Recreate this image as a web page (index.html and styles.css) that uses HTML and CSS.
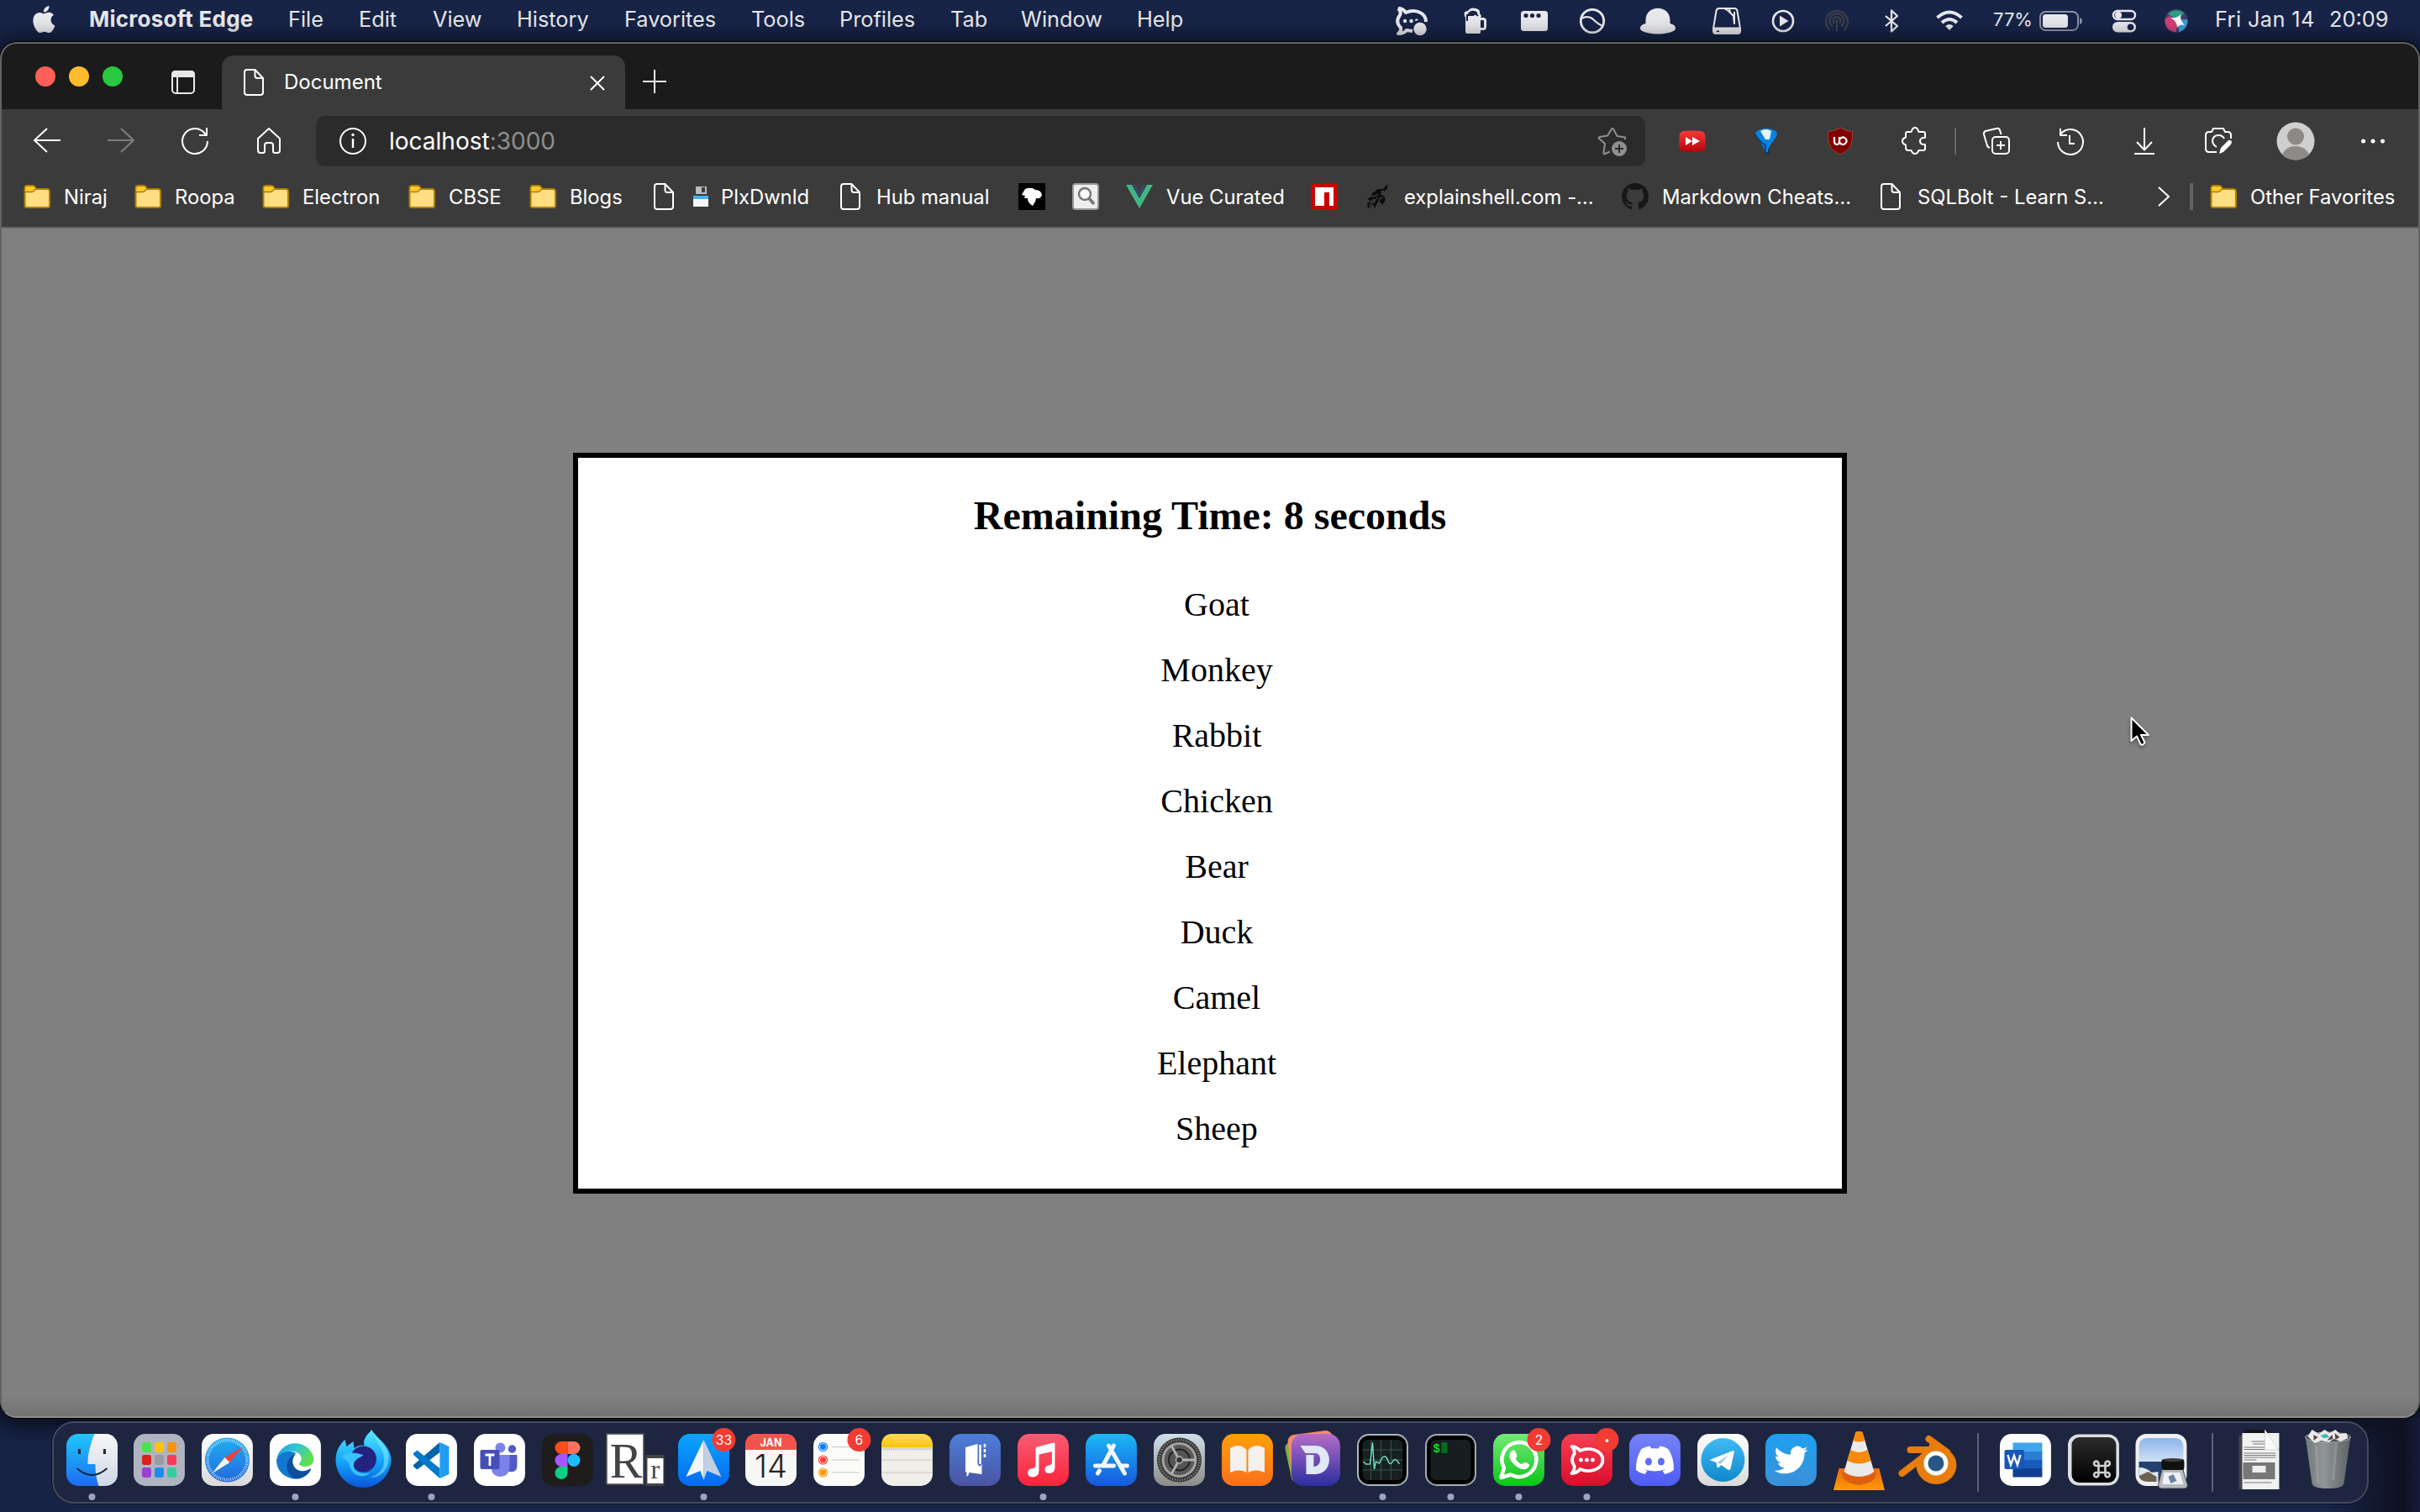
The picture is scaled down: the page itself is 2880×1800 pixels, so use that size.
FILE: index.html
```html
<!DOCTYPE html>
<html lang="en">
<head>
<meta charset="utf-8">
<title>Document</title>
<link rel="stylesheet" href="styles.css">
</head>
<body>
<svg class="defs" aria-hidden="true">
  <defs>
    <linearGradient id="gBlue" x1="0" y1="0" x2="0" y2="1"><stop offset="0" stop-color="#1fc8fb"/><stop offset="1" stop-color="#1c6cf2"/></linearGradient>
    <linearGradient id="gFace" x1="0" y1="0" x2="0" y2="1"><stop offset="0" stop-color="#f6f6f8"/><stop offset="1" stop-color="#cfd8e6"/></linearGradient>
    <linearGradient id="gSilver" x1="0" y1="0" x2="0" y2="1"><stop offset="0" stop-color="#fff"/><stop offset="1" stop-color="#dadada"/></linearGradient>
    <linearGradient id="gSafari" x1="0" y1="0" x2="0" y2="1"><stop offset="0" stop-color="#1fb0f3"/><stop offset="1" stop-color="#2467dc"/></linearGradient>
    <linearGradient id="gEdge" x1="0" y1="0" x2="1" y2=".4"><stop offset="0" stop-color="#1c9de0"/><stop offset=".5" stop-color="#33c3d8"/><stop offset="1" stop-color="#5fe04f"/></linearGradient>
    <linearGradient id="gFox" x1="0" y1="0" x2="0" y2="1"><stop offset="0" stop-color="#57e6ff"/><stop offset=".55" stop-color="#12a5fa"/><stop offset="1" stop-color="#0a56d8"/></linearGradient>
    <linearGradient id="gSpark" x1="0" y1="0" x2="0" y2="1"><stop offset="0" stop-color="#0aa6fe"/><stop offset="1" stop-color="#0669f0"/></linearGradient>
    <linearGradient id="gNotes" x1="0" y1="0" x2="0" y2="1"><stop offset="0" stop-color="#ffdc55"/><stop offset="1" stop-color="#fdc40a"/></linearGradient>
    <linearGradient id="gDev" x1="0" y1="0" x2="0" y2="1"><stop offset="0" stop-color="#4c7fdb"/><stop offset="1" stop-color="#4a54a2"/></linearGradient>
    <linearGradient id="gMusic" x1="0" y1="0" x2="0" y2="1"><stop offset="0" stop-color="#fb5b74"/><stop offset="1" stop-color="#fa233b"/></linearGradient>
    <linearGradient id="gStore" x1="0" y1="0" x2="0" y2="1"><stop offset="0" stop-color="#1bb9f5"/><stop offset="1" stop-color="#1658dc"/></linearGradient>
    <linearGradient id="gPrefs" x1="0" y1="0" x2="0" y2="1"><stop offset="0" stop-color="#cfe0ea"/><stop offset="1" stop-color="#8d8b88"/></linearGradient>
    <linearGradient id="gBooks" x1="0" y1="0" x2="0" y2="1"><stop offset="0" stop-color="#ff9f0a"/><stop offset="1" stop-color="#fb6f1b"/></linearGradient>
    <linearGradient id="gDash" x1="0" y1="0" x2="0" y2="1"><stop offset="0" stop-color="#b56ccb"/><stop offset="1" stop-color="#2c2e9e"/></linearGradient>
    <linearGradient id="gWa" x1="0" y1="0" x2="0" y2="1"><stop offset="0" stop-color="#74ea77"/><stop offset="1" stop-color="#0ac51a"/></linearGradient>
    <linearGradient id="gRc" x1="0" y1="0" x2="0" y2="1"><stop offset="0" stop-color="#f83e53"/><stop offset="1" stop-color="#d90e2b"/></linearGradient>
    <linearGradient id="gDisc" x1="0" y1="0" x2="0" y2="1"><stop offset="0" stop-color="#7583f7"/><stop offset="1" stop-color="#4f5cf3"/></linearGradient>
    <linearGradient id="gTg" x1="0" y1="0" x2="0" y2="1"><stop offset="0" stop-color="#41bbf5"/><stop offset="1" stop-color="#0e88cc"/></linearGradient>
    <linearGradient id="gTw" x1="0" y1="0" x2="0" y2="1"><stop offset="0" stop-color="#1da1f2"/><stop offset="1" stop-color="#3a90d6"/></linearGradient>
    <linearGradient id="gCone" x1="0" y1="0" x2="0" y2="1"><stop offset="0" stop-color="#e86a10"/><stop offset="1" stop-color="#ff9a05"/></linearGradient>
    <linearGradient id="gTrash" x1="0" y1="0" x2="1" y2="0"><stop offset="0" stop-color="#74787a"/><stop offset=".4" stop-color="#8f9495"/><stop offset="1" stop-color="#5e6365"/></linearGradient>
    <linearGradient id="gRed" x1="0" y1="0" x2="0" y2="1"><stop offset="0" stop-color="#f93a3a"/><stop offset="1" stop-color="#b50308"/></linearGradient>
    <linearGradient id="gSky" x1="0" y1="0" x2="0" y2="1"><stop offset="0" stop-color="#8db3ea"/><stop offset="1" stop-color="#cfe0f6"/></linearGradient>
    <linearGradient id="gCmd" x1="0" y1="0" x2="0" y2="1"><stop offset="0" stop-color="#2c2c2c"/><stop offset="1" stop-color="#000"/></linearGradient>
    <symbol id="folder" viewBox="0 0 32 32"><path d="M1.500 27V6Q1.500 3 4.500 3H11Q13 3 14 5L15 7H28Q31 7 31 10V27Q31 29 29 29H4Q1.500 29 1.500 27Z" fill="#ffdf82" stroke="#ad7d00" stroke-width="2"/><path d="M2.500 9.500V6Q2.500 4 4.500 4H11Q12.500 4 13.500 6L14 7.500 11.500 9.800Q11 10.300 10 10.300H2.500Z" fill="#ffca28"/><path d="M1.500 10.500H10Q11 10.500 12 9.500L15 7" fill="none" stroke="#ad7d00" stroke-width="1.500"/></symbol>
    <symbol id="page" viewBox="0 0 32 32"><path d="M17.500 1H8Q5 1 5 4V28Q5 31 8 31H24Q27 31 27 28V11Z M17.500 1V8Q17.500 11 20 11H27" fill="none" stroke="#fff" stroke-width="2" stroke-linejoin="round"/></symbol>
  </defs>
</svg>

<header class="menubar">
  <svg class="mi" viewBox="-24 -24 48 48"><path class="f" d="M9.700 -.200C9.700 -4 12.800 -5.800 12.900 -5.900C11.200 -8.400 8.500 -8.800 7.500 -8.800C5.200 -9 3 -7.400 1.900 -7.400C.700 -7.400 -1.100 -8.800 -3.100 -8.700C-5.700 -8.700 -8 -7.200 -9.400 -5C-12.100 -.300 -10.100 6.800 -7.500 10.600C-6.100 12.500 -4.600 14.600 -2.600 14.500C-.600 14.400 .100 13.200 2.400 13.200C4.800 13.200 5.400 14.500 7.500 14.500C9.600 14.400 11 12.600 12.200 10.700C13.700 8.500 14.300 6.400 14.300 6.300C14.200 6.200 9.700 4.500 9.700 -.200ZM6 -11.300C7.100 -12.700 7.900 -14.500 7.700 -16.400C6.100 -16.300 4.100 -15.300 3 -13.900C2 -12.700 1.100 -10.900 1.300 -9.100C3.100 -9 4.900 -10 6 -11.300Z" transform="translate(-1.500 -1) scale(1.040)"/></svg>
  <b class="m-app">Microsoft Edge</b><span>File</span><span>Edit</span><span>View</span><span>History</span><span>Favorites</span><span>Tools</span><span>Profiles</span><span>Tab</span><span>Window</span><span>Help</span>
  <svg class="mi" viewBox="-24 -24 48 48"><path class="s" stroke-width="4" d="M-16 -15Q-10 -15 -7 -10C4 -15 17 -10 17 1M-16 -15Q-12 -11 -14 -7Q-20 1 -13 8Q-12 12 -16 15Q-9 15 -6 11L1 12"/><circle class="f" cx="-8" cy="0" r="2.200"/><circle class="f" cx="-.500" cy="0" r="2.200"/><path class="f" d="M4 0A2 2 0 0 1 8 -1Z"/><circle class="f" cx="10" cy="9.500" r="7.700"/></svg>
  <svg class="mi" viewBox="-24 -24 48 48"><path class="f" d="M-12 -6Q-14 -12 -8 -12Q-5 -17 1 -15Q7 -14 6 -9Q9 -6 7 -4V14Q7 15 5 15H-9Q-11 15 -11 13V-4Z"/><path d="M-9 0V-7H-2L1 -9 4 -6" fill="none" stroke="#182447" stroke-width="2"/><path d="M-8 -9Q-5 -13 0 -12Q4 -11 3 -8L-1 -7H-8Z" fill="#182447"/><path class="s" stroke-width="3" d="M6 -2.500H10Q12.500 -2.500 12.500 0V7Q12.500 9.500 10 9.500H6"/></svg>
  <svg class="mi" viewBox="-24 -24 48 48"><rect class="f" x="-16" y="-12" width="32" height="24" rx="3.500"/><g fill="#182447"><circle cx="-10" cy="-6.500" r="2.600"/><circle cx="-2.500" cy="-6.500" r="2.600"/><circle cx="5" cy="-6.500" r="2.600"/></g></svg>
  <svg class="mi" viewBox="-24 -24 48 48"><circle class="s" r="13.700" stroke-width="2.800"/><path class="s" stroke-width="2.200" d="M-13 -3C-7 -6 -2 -5 2 -1S8 4 12 6"/></svg>
  <svg class="mi" viewBox="-24 -24 48 48"><path class="f" d="M-14.500 3V-1C-14.500 -20 14.500 -20 14.500 -1V3C19 4 21 6 21 9C21 13 9 15.500 0 15.500S-21 13 -21 9C-21 6 -19 4 -14.500 3Z"/></svg>
  <svg class="mi" viewBox="-24 -24 48 48"><path class="s" stroke-width="2" d="M-9 -15H9Q12 -15 12.500 -12L16 9V12Q16 15 13 15H-13Q-16 15 -16 12V9L-12.500 -12Q-12 -15 -9 -15Z"/><path class="f" fill-rule="evenodd" d="M-16 7.500H16V12Q16 15.500 13 15.500H-13Q-16 15.500 -16 12ZM-12 11.500H-9V13H-12Z"/><path class="s" stroke-width="2" d="M-3 -15L2 -12 8 -6 9 4M3 -15L4 -10M9 -11V3"/></svg>
  <svg class="mi" viewBox="-24 -24 48 48"><circle class="s" r="12" stroke-width="2.600"/><path class="f" d="M-4 -6.500L6.500 0 -4 6.500Z"/></svg>
  <svg class="mi" viewBox="-24 -24 48 48"><g fill="none" stroke="#3e4048" stroke-width="2.200"><path d="M-8 11A13 13 0 1 1 8 11M-5 6.500A8.500 8.500 0 1 1 5 6.500M-3 3A4.500 4.500 0 1 1 3 3"/></g><circle r="2" fill="#3e4048"/><path d="M-1 2H1V12H-1Z" fill="#3e4048"/></svg>
  <svg class="mi" viewBox="-24 -24 48 48"><path class="s" stroke-width="2.300" d="M-7 -6L7 6 0 12.500V-12.500L7 -6 -7 6"/></svg>
  <svg class="mi" viewBox="-24 -24 48 48"><path class="s" stroke-width="4" stroke-linecap="butt" d="M-14.500 -4Q0 -17 14.500 -4M-9 2Q0 -6 9 2"/><path class="f" d="M-4.800 6Q0 2 4.800 6L0 11Z"/></svg>
  <span class="pct">77%</span>
  <svg class="bat" viewBox="0 0 56 48"><rect x="4" y="13" width="45" height="22" rx="6.500" fill="none" stroke="#8b91a3" stroke-width="2"/><rect class="f" x="7" y="16" width="30" height="16" rx="3.500"/><path d="M51 20Q54 21 54 24T51 28Z" fill="#8b91a3"/></svg>
  <svg class="mi" viewBox="-24 -24 48 48"><rect class="s" x="-13" y="-12" width="26" height="10" rx="5" stroke-width="2.400"/><circle class="f" cx="-7" cy="-7" r="4"/><rect class="f" x="-14" y="1" width="28" height="12.500" rx="6.200"/><circle cx="7.500" cy="7.200" r="3.800" fill="#182447"/></svg>
  <svg class="mi" viewBox="-24 -24 48 48"><circle r="14" fill="#39406b"/><path d="M-10 -8A13 13 0 0 1 9 -9L2 -1Z" fill="#2e9b84"/><path d="M-13 -3A13 13 0 0 0 0 13L1 0-8 -6Z" fill="#d23f78"/><path d="M3 13A13 13 0 0 0 13 -2L2 -1Z" fill="#3b9fd8"/><path d="M-7 -4Q2 -3 5 -8Q4 -1 10 5Q4 3 1 8Q1 0 -7 -4Z" fill="#fff"/></svg>
  <span class="date">Fri Jan 14</span><span class="time">20:09</span>
</header>

<main class="window">
  <div class="tabstrip">
    <div class="lights"><i class="red"></i><i class="amber"></i><i class="green"></i></div>
    <svg class="vt" viewBox="0 0 28 28"><rect x="1" y="1" width="26" height="26" rx="4" fill="none" stroke="#e8e8e8" stroke-width="2"/><path d="M1 7V5Q1 1 5 1H23Q27 1 27 5V7ZM7 8V27" fill="#e8e8e8" stroke="#e8e8e8" stroke-width="2"/></svg>
    <div class="tab">
      <svg class="i32" viewBox="0 0 32 32"><use href="#page"/></svg><span class="tabtitle">Document</span>
      <svg class="close" viewBox="0 0 18 18"><path d="M1 1L17 17M17 1L1 17" stroke="#fff" stroke-width="2"/></svg>
    </div>
    <svg class="plus" viewBox="0 0 28 28"><path d="M14 0V28M0 14H28" stroke="#e8e8e8" stroke-width="2"/></svg>
  </div>

  <div class="toolbar">
    <svg class="ti" viewBox="-24 -24 48 48"><path d="M16 -1H-15M0 -15L-15 -1 0 13" /></svg>
    <svg class="ti dim" viewBox="-24 -24 48 48"><path d="M-16 -1H15M0 -15L15 -1 0 13"/></svg>
    <svg class="ti" viewBox="-24 -24 48 48"><path d="M15 0A15 15 0 1 1 9 -12L14 -7M14 -16V-7H5"/></svg>
    <svg class="ti" viewBox="-24 -24 48 48"><path d="M-13 -3L0 -15 13 -3V11Q13 14 10 14H7Q5 14 5 12V5Q5 2 2 2H-2Q-5 2 -5 5V12Q-5 14 -7 14H-10Q-13 14 -13 11Z"/></svg>
    <div class="address">
      <svg class="ti" viewBox="-24 -24 48 48"><circle r="15"/><path d="M0 -3V8" stroke-width="2.400"/><circle cy="-7.500" r="1" fill="#fff" stroke-width="1.500"/></svg>
      <span class="url">localhost<em>:3000</em></span>
      <svg class="ti star" viewBox="-24 -24 48 48"><path d="M-3 12.500L-9 15Q-11 16 -10.500 13L-9 3 -16 -3Q-17 -5 -15 -5L-6 -6.500 -1 -14.500Q0 -16 1 -14.500L5.500 -6 15 -4.500V-2"/><circle cx="8" cy="9" r="9" fill="#8f8f8f" stroke="none"/><path d="M8 4V14M3 9H13" stroke="#2b2b2b"/></svg>
    </div>
    <svg class="ti" viewBox="-24 -24 48 48"><path d="M-15.500 -6Q-15 -11.500 -10 -12Q0 -13 10 -12Q15 -11.500 15.500 -6Q16 0 15.500 7Q15 12 10 12.500Q0 13.500 -10 12.500Q-15 12 -15.500 7Q-16 0 -15.500 -6Z" fill="url(#gRed)" stroke="none"/><path d="M-8 -5L0 0V-5L9 0 0 5V0L-8 5Z" fill="#fff" stroke="none"/></svg>
    <svg class="ti" viewBox="-24 -24 48 48"><path d="M-13 -9C-11 -17 11 -17 13 -9C13 -4 4 3 2 11V14H-2V11C-4 3 -13 -4 -13 -9Z" fill="#0b83e0" stroke="none"/><path d="M-7 -12Q0 -16 6 -12L4 -2H-1Z" fill="#e5f5ff" stroke="none"/><path d="M-13 -8Q-9 0 -1 5V14H3V9" stroke="#063363" stroke-width="1.500"/></svg>
    <svg class="ti" viewBox="-24 -24 48 48"><path d="M0 -16Q6 -12 14.500 -11.500C15 2 13 10 0 16C-13 10 -15 2 -14.500 -11.500Q-6 -12 0 -16Z" fill="#800000" stroke="#a14646" stroke-width="1"/><path d="M-7 -5V0Q-7 4 -4 4T-1 0V-5M-1 -.500A4.300 4.300 0 1 1 -1 0" stroke-width="2.200"/></svg>
    <svg class="ti" viewBox="-24 -24 48 48"><path d="M-9 -11H-5Q-4 -11 -4 -12Q-3 -16 0 -16T4 -12Q4 -11 5 -11H10Q12 -11 12 -9V-4H10Q6 -3.500 6 0T10 4H12V9Q12 11 10 11H5Q4 11 4 12Q3 15 0 15T-4 12Q-4 11 -5 11H-8Q-11 11 -11 8V5Q-11 4 -12 4Q-15 3 -15 0T-12 -4Q-11 -4 -11 -5V-9Q-11 -11 -9 -11Z" transform="translate(1 0)"/></svg>
    <i class="tsep"></i>
    <svg class="ti" viewBox="-24 -24 48 48"><rect x="-5" y="-5" width="20" height="20" rx="4"/><path d="M5 0V10M0 5H10M-8 8Q-11 7 -11.500 4L-15 -8Q-15.500 -11 -13 -12L0 -15Q3 -16 4 -13L5.500 -8"/></svg>
    <svg class="ti" viewBox="-24 -24 48 48"><path d="M-12 -15V-7H-4M-12 -8A15 15 0 1 1 -15 1M-1 -7V3H5"/></svg>
    <svg class="ti" viewBox="-24 -24 48 48"><path d="M0 -16V10M-9 1L0 10.500 9 1M-12 15H12"/></svg>
    <svg class="ti" viewBox="-24 -24 48 48"><path d="M-2 13H-11Q-15 13 -15 9V-7Q-15 -11 -11 -11H-8L-6 -15H6L8 -11H11Q15 -11 15 -7V-3M-2 7Q-7 4 -7 -1A7.500 7.500 0 0 1 7 -3"/><path d="M1 15L3 8 12 -1Q15 -2 16 1Q16 3 14 5L6 13Z" fill="#fff" stroke="none"/></svg>
    <svg class="ti" viewBox="-24 -24 48 48"><clipPath id="av"><circle r="22.500"/></clipPath><circle r="22.500" fill="#d0cfcd" stroke="none"/><g clip-path="url(#av)" fill="#8b8a88" stroke="none"><circle cy="-5.500" r="10"/><ellipse cy="20" rx="16.500" ry="14"/></g></svg>
    <svg class="ti" viewBox="-24 -24 48 48"><g fill="#fff" stroke="none"><circle cx="-11.500" r="2.500"/><circle r="2.500"/><circle cx="11.500" r="2.500"/></g></svg>
  </div>

  <nav class="bookmarks">
    <svg class="i32"><use href="#folder"/></svg><span>Niraj</span>
    <svg class="i32"><use href="#folder"/></svg><span>Roopa</span>
    <svg class="i32"><use href="#folder"/></svg><span>Electron</span>
    <svg class="i32"><use href="#folder"/></svg><span>CBSE</span>
    <svg class="i32"><use href="#folder"/></svg><span>Blogs</span>
    <svg class="i32"><use href="#page"/></svg>
    <svg class="i24" viewBox="0 0 24 24"><path d="M1 0H22L24 2V24H0V1Z" fill="#3c3c3c"/><rect x="6" y="0" width="13" height="9" fill="#b9bcc0"/><rect x="13" y="1" width="4" height="6" fill="#3a3a3a"/><rect x="3" y="11" width="18" height="13" fill="#f4f6f8"/><rect x="3" y="11" width="18" height="4" fill="#43b4f0"/></svg><span>PlxDwnld</span>
    <svg class="i32"><use href="#page"/></svg><span>Hub manual</span>
    <svg class="i32" viewBox="0 0 32 32"><path d="M0 0H32V32H0Z"/><path d="M5 12L8 7Q12 5 17 6L20 8Q27 8 28 14Q27 19 21 18L20 22 17 27Q11 24 11 18L7 18 8 15 4 14Z" fill="#fff"/></svg>
    <svg class="i32" viewBox="0 0 32 32"><rect x="1" y="1" width="30" height="30" rx="3" fill="#eee" stroke="#999" stroke-width="2"/><circle cx="15" cy="13" r="7" fill="#f8f8f8" stroke="#777" stroke-width="2.500"/><path d="M20 18L26 25" stroke="#777" stroke-width="3.500"/></svg>
    <svg class="i32" viewBox="0 0 32 32"><path d="M0 2H7L16 18 25 2H32L16 30Z" fill="#41b883"/><path d="M7 2H12L16 9 20 2H25L16 18Z" fill="#35495e"/></svg><span>Vue Curated</span>
    <svg class="i32" viewBox="0 0 32 32"><path d="M0 0H32V32H0Z" fill="#c00"/><path d="M5 5H27V27H22V11H16V27H5Z" fill="#fff"/></svg>
    <svg class="i32" viewBox="0 0 32 32"><path d="M27 1Q28 9 22 10L18 13Q24 14 25 20L21 26Q19 21 16 23L12 30 10 25 4 30 3 24 7 21 3 19 8 16 9 12 16 7 22 7Z" fill="#0c0c0c"/><path d="M5 27L13 19M8 16L16 14M19 10L23 9M14 27L18 20M10 24L15 17M6 23L11 19M17 19L22 17" stroke="#3b3b3b" stroke-width="1.500"/></svg><span>explainshell.com -…</span>
    <svg class="i32" viewBox="0 0 16 16"><path fill="#181616" d="M8 0C3.580 0 0 3.580 0 8c0 3.540 2.290 6.530 5.470 7.590.4.070.55-.17.55-.38 0-.19-.01-.82-.01-1.490-2.010.37-2.530-.49-2.690-.94-.09-.23-.48-.94-.82-1.130-.28-.15-.68-.52-.01-.53.63-.01 1.080.58 1.230.82.72 1.210 1.870.87 2.330.66.07-.52.28-.87.51-1.070-1.780-.2-3.640-.89-3.640-3.950 0-.87.31-1.590.82-2.150-.08-.2-.36-1.020.08-2.120 0 0 .67-.21 2.200.82.64-.18 1.320-.27 2-.27s1.360.09 2 .27c1.530-1.040 2.200-.82 2.200-.82.44 1.100.16 1.920.08 2.120.51.56.82 1.270.82 2.150 0 3.070-1.870 3.750-3.650 3.950.29.25.54.73.54 1.480 0 1.070-.01 1.930-.01 2.200 0 .21.15.46.55.38A8.010 8.010 0 0 0 16 8c0-4.420-3.580-8-8-8z"/></svg><span>Markdown Cheats…</span>
    <svg class="i32"><use href="#page"/></svg><span>SQLBolt - Learn S…</span>
    <svg class="i32" viewBox="0 0 32 32"><path d="M9 5L21 16 9 27" fill="none" stroke="#fff" stroke-width="2"/></svg>
    <i class="bsep"></i>
    <svg class="i32"><use href="#folder"/></svg><span>Other Favorites</span>
  </nav>

  <section class="page">
    <div class="card">
      <h2>Remaining Time: 8 seconds</h2>
      <ul>
        <li>Goat</li><li>Monkey</li><li>Rabbit</li><li>Chicken</li><li>Bear</li><li>Duck</li><li>Camel</li><li>Elephant</li><li>Sheep</li>
      </ul>
    </div>
  </section>
</main>

<footer class="desk">
<div class="dock">
  <!-- Finder -->
  <svg viewBox="-40.5 -46 81 98"><clipPath id="body"><rect x="-30.500" y="-31" width="61" height="62" rx="14"/></clipPath><g clip-path="url(#body)"><path d="M-31 -31H31V31H-31Z" fill="url(#gBlue)"/><path d="M3 -31C-2 -18 -5 -8 -5 5H4Q4 20 8 31H31V-31Z" fill="url(#gFace)"/></g><path d="M-15 -13V-7M15 -13V-7" stroke="#1c2a3c" stroke-width="3"/><path d="M-18 10Q0 26 18 10" fill="none" stroke="#14243a" stroke-width="2"/><circle class="dot" cy="44" r="4"/></svg>
  <!-- Launchpad -->
  <svg viewBox="-40.500 -46 81 98"><rect x="-30.500" y="-31" width="61" height="62" rx="14" fill="#b0b4c0"/><g><rect x="-20.500" y="-21" width="11" height="12" rx="2.500" fill="#4fe04f"/><rect x="-5.500" y="-21" width="11" height="12" rx="2.500" fill="#fdc312"/><rect x="9.500" y="-21" width="11" height="12" rx="2.500" fill="#f8920f"/><rect x="-20.500" y="-6" width="11" height="12" rx="2.500" fill="#dd1f1f"/><rect x="-5.500" y="-6" width="11" height="12" rx="2.500" fill="#999da1"/><rect x="9.500" y="-6" width="11" height="12" rx="2.500" fill="#fb3958"/><rect x="-20.500" y="9" width="11" height="12" rx="2.500" fill="#9b3fd1"/><rect x="-5.500" y="9" width="11" height="12" rx="2.500" fill="#1a8ef5"/><rect x="9.500" y="9" width="11" height="12" rx="2.500" fill="#2ecfa0"/></g></svg>
  <!-- Safari -->
  <svg viewBox="-40.500 -46 81 98"><rect x="-30.500" y="-31" width="61" height="62" rx="14" fill="url(#gSilver)"/><circle r="26.500" fill="url(#gSafari)"/><circle r="23.500" fill="none" stroke="#d8efff" stroke-width="3.500" stroke-dasharray=".8 1.660"/><path d="M19 -16L3 3 -3 -3Z" fill="#f0413a"/><path d="M-18 16L-3 -3 3 3Z" fill="#f4f4f4"/></svg>
  <!-- Edge -->
  <svg viewBox="-40.500 -46 81 98"><rect x="-30.500" y="-31" width="61" height="62" rx="14" fill="#fff"/><path d="M-22.500 2A22.500 22.500 0 0 1 22 -2C23 8 11 10 5 6C3 4 8 3 7 -3C6 -9 -4 -12 -10 -9C-17 -7 -22 -2 -22.500 2Z" fill="url(#gEdge)"/><path d="M-22.500 1C-20 -10 -8 -12 1 -8C-6 -4 -8 8 0 14C6 18 14 17 19 11C14 20 4 24 -5 22C-16 19 -22 11 -22.500 1Z" fill="#1478d0"/><path d="M-10 7C-10 0 -6 -5 1 -7C-6 -1 -3 9 3 12C9 15 15 12 19 10C16 19 6 24 -1 22C-7 19 -10 14 -10 7Z" fill="#0c4f9c"/><circle class="dot" cy="44" r="4"/></svg>
  <!-- Firefox Developer Edition -->
  <svg viewBox="-40.500 -46 81 98"><path d="M10 -36C14 -27 32 -18 33 -1C33 18 18 33 0 33C-19 33 -33 18 -33 0C-33 -10 -28 -19 -22 -24L-20 -16 -12 -22 -11 -14C-7 -17 -3 -18 1 -17C-1 -26 6 -31 10 -36Z" fill="url(#gFox)"/><path d="M12 -33C14 -20 28 -12 24 6C22 14 14 20 6 21C24 22 31 8 30 -6C28 -18 15 -25 12 -33Z" fill="#7deeff" opacity=".55"/><circle cy="-1" r="15.500" fill="#25227f"/><path d="M-25 -5C-17 -11 -7 -8 0 -6C-4 -2 -7 -3 -11 3C-14 14 -2 18 8 15C0 24 -16 18 -17 4C-20 0 -24 -1 -25 -5Z" fill="#38c3ff"/></svg>
  <!-- VS Code -->
  <svg viewBox="-40.500 -46 81 98"><rect x="-30.500" y="-31" width="61" height="62" rx="14" fill="#fff"/><path d="M10 -21V-9L-17 11.500 -21.500 8V6Z" fill="#0065a9"/><path d="M10 22V10L-17 -11.500 -21.500 -8V-6Z" fill="#007acc"/><path d="M10 -21L21 -16V17L10 22Z" fill="#1f9cf0"/><circle class="dot" cy="44" r="4"/></svg>
  <!-- Teams -->
  <svg viewBox="-40.500 -46 81 98"><rect x="-30.500" y="-31" width="61" height="62" rx="14" fill="#fff"/><circle cx="1" cy="-14.500" r="6" fill="#7b83eb"/><circle cx="15" cy="-13" r="4.700" fill="#5059c9"/><path d="M8 -6H21V7Q21 15 13 14H8Z" fill="#5059c9"/><path d="M-10 -6H12V9Q11 20 1 20T-10 9Z" fill="#7b83eb"/><rect x="-23" y="-12" width="23" height="23" rx="2" fill="#464eb8"/><path d="M-17 -6H-6M-11.500 -6V7" stroke="#fff" stroke-width="2.800"/></svg>
  <!-- Figma -->
  <svg viewBox="-40.500 -46 81 98"><rect x="-30.500" y="-31" width="61" height="62" rx="14" fill="#1f1c1c"/><path d="M0 -22H-7.500A7.500 7.500 0 0 0 -7.500 -7H0Z" fill="#f24e1e"/><path d="M0 -22H7.500A7.500 7.500 0 0 1 7.500 -7H0Z" fill="#ff7262"/><path d="M0 -7H-7.500A7.500 7.500 0 0 0 -7.500 8H0Z" fill="#a259ff"/><circle cx="7.500" cy=".500" r="7.500" fill="#1abcfe"/><path d="M0 8H-7.500A7.500 7.500 0 1 0 0 15Z" fill="#0acf83"/></svg>
  <!-- Font tool -->
  <svg viewBox="-40.500 -46 81 98"><rect x="-34.500" y="-31" width="44" height="60" fill="#fff" stroke="#555" stroke-width="1.500"/><text class="serif" x="-31" y="21" font-size="60" textLength="39" lengthAdjust="spacingAndGlyphs">R</text><path d="M12 -6H34V31H12Z" fill="#444"/><path d="M14 -2H33V28H14Z" fill="#fff"/><text class="serif" x="18" y="22" font-size="32">r</text></svg>
  <!-- Spark -->
  <svg viewBox="-40.500 -46 81 98"><rect x="-30.500" y="-31" width="61" height="62" rx="14" fill="url(#gSpark)"/><path d="M0 -24L-21 20 -4 13 0 24Z" fill="#f2f6fb"/><path d="M0 -24L21 20 4 13 0 24Z" fill="#c5cfe2"/><circle class="badge" cx="24" cy="-24" r="14"/><text class="bt" x="24" y="-18.500" font-size="15.500">33</text><circle class="dot" cy="44" r="4"/></svg>
  <!-- Calendar -->
  <svg viewBox="-40.500 -46 81 98"><rect x="-30.500" y="-31" width="61" height="62" rx="14" fill="#f7f7f5"/><path d="M-30.500 -12V-17Q-30.500 -31 -16.500 -31H16.500Q30.500 -31 30.500 -17V-12Z" fill="#f2544b"/><text class="ct" y="-16" font-size="12.500" font-weight="700" fill="#fff">JAN</text><text class="ct" y="21" font-size="38" font-weight="300" fill="#222" textLength="39">14</text></svg>
  <!-- Reminders -->
  <svg viewBox="-40.500 -46 81 98"><rect x="-30.500" y="-31" width="61" height="62" rx="14" fill="#fbfbfa"/><g fill="none" stroke-width="1.200"><circle cx="-19" cy="-15.500" r="5" stroke="#0a7aff"/><circle cx="-19" r="5" stroke="#ff3b30"/><circle cx="-19" cy="15" r="5" stroke="#ff9500"/></g><circle cx="-19" cy="-15.500" r="3.500" fill="#0a7aff"/><circle cx="-19" r="3.500" fill="#ff3b30"/><circle cx="-19" cy="15" r="3.500" fill="#ff9500"/><path d="M-8 -15.500H24M-8 0H24M-8 15H24" stroke="#c4c4c4"/><circle class="badge" cx="24" cy="-24" r="14"/><text class="bt" x="24" y="-18.500" font-size="15.500">6</text></svg>
  <!-- Notes -->
  <svg viewBox="-40.500 -46 81 98"><rect x="-30.500" y="-31" width="61" height="62" rx="14" fill="#f0eee9"/><path d="M-30.500 -15V-17Q-30.500 -31 -16.500 -31H16.500Q30.500 -31 30.500 -17V-15Z" fill="url(#gNotes)"/><path d="M-30 -14H30M-30 0H30M-30 15H30" stroke="#c9c7c2"/><path d="M-29 -12.500H30" stroke="#aaa" stroke-width="1.500" stroke-dasharray="1 1.500"/></svg>
  <!-- DevDocs -->
  <svg viewBox="-40.500 -46 81 98"><rect x="-30.500" y="-31" width="61" height="62" rx="14" fill="url(#gDev)"/><path d="M-11.500 -15L3 -19V5L5.500 8 8 5V17L-7 15 -8 18 -10 20V15L-11.500 14Z" fill="#fff"/><path d="M6 -18V5" stroke="#fff" stroke-width="2.500"/><path d="M11.500 -19V-2" stroke="#fff" stroke-width="2.500" stroke-dasharray="4 2"/></svg>
  <!-- Music -->
  <svg viewBox="-40.500 -46 81 98"><rect x="-30.500" y="-31" width="61" height="62" rx="14" fill="url(#gMusic)"/><path d="M-9 -13Q-9 -15 -7 -15.500L12 -20.500Q14 -21 14 -19V9Q14 16 7 16Q2 16 2 11.500T8 6Q10.500 5.500 10.500 3V-10L-5 -6.500V13Q-5 20 -12 20.500Q-18 20.500 -18.500 15.500Q-18.500 11 -12 9.800Q-9 9.500 -9 7Z" fill="#fff"/><circle class="dot" cy="44" r="4"/></svg>
  <!-- App Store -->
  <svg viewBox="-40.500 -46 81 98"><rect x="-30.500" y="-31" width="61" height="62" rx="14" fill="url(#gStore)"/><path d="M3 -17L-10 7M-14 13L-16 16M-3 -17L16 16M-19 7H3M12 7H19" stroke="#f1f7ff" stroke-width="5" stroke-linecap="round"/></svg>
  <!-- System Preferences -->
  <svg viewBox="-40.500 -46 81 98"><rect x="-30.500" y="-31" width="61" height="62" rx="14" fill="url(#gPrefs)"/><circle r="26.500" fill="#333"/><circle r="24" fill="none" stroke="#777" stroke-width="3" stroke-dasharray="1.500 1.500"/><circle r="19.500" fill="#5a5a5a" stroke="#a3a3a3" stroke-width="3"/><circle r="12.500" fill="#555" stroke="#222" stroke-width="2"/><path d="M0 0H19M0 0L-9.500 -17M0 0L-9.500 17" stroke="#b3b3b3" stroke-width="2.800"/><circle r="4" fill="#333" stroke="#b3b3b3" stroke-width="1.500"/></svg>
  <!-- Books -->
  <svg viewBox="-40.500 -46 81 98"><rect x="-30.500" y="-31" width="61" height="62" rx="14" fill="url(#gBooks)"/><path d="M-1 -12Q-10 -21 -20.500 -14V15Q-10 10 -1 15ZM1 -12Q10 -21 20.500 -14V15Q10 10 1 15Z" fill="#f3f0ee"/></svg>
  <!-- Dash -->
  <svg viewBox="-40.500 -46 81 98"><path d="M-36 -13Q-37 -19 -31 -20L-26 26Q-28 24 -29 20Z" fill="#7cb342"/><path d="M-33 -20Q-34 -28 -26 -30L12 -35Q17 -35 20 -30L-20 -20V26Q-27 22 -28 16Z" fill="#ef8c6a"/><rect x="-28.500" y="-31" width="58" height="62" rx="14" fill="url(#gDash)"/><path d="M-18 -17H0C22 -17 22 17 0 17H-11V-6H-2V8C8 8 8 -8 0 -8H-12Z" fill="#dfe9f7"/></svg>
  <!-- Activity Monitor -->
  <svg viewBox="-40.500 -46 81 98"><rect x="-30.500" y="-31" width="61" height="62" rx="14" fill="#a9b9bf"/><rect x="-28.500" y="-29" width="57" height="58" rx="12" fill="#000"/><rect x="-24" y="-24" width="48" height="48" rx="6" fill="#15201f"/><path d="M-24 -12H24M-24 0H24M-24 12H24M-14 -24V24M-2 -24V24M10 -24V24" stroke="#41544f"/><path d="M-23 2L-20 5H-15L-12 -21 -10 11 -8 2 -4 4Q2 -10 6 0Q9 8 12 2T20 5" fill="none" stroke="#6fd8c3" stroke-width="1.500"/><circle class="dot" cy="44" r="4"/></svg>
  <!-- Terminal -->
  <svg viewBox="-40.500 -46 81 98"><rect x="-30.500" y="-31" width="61" height="62" rx="14" fill="#a3adb2"/><rect x="-28.500" y="-29" width="57" height="58" rx="12" fill="#000"/><rect x="-24" y="-24" width="48" height="48" rx="6" fill="#161e20"/><text class="mono" x="-21" y="-9" font-size="14">$</text><rect x="-11" y="-21" width="7" height="13" fill="#0a6b1c"/><circle class="dot" cy="44" r="4"/></svg>
  <!-- WhatsApp -->
  <svg viewBox="-40.500 -46 81 98"><rect x="-30.500" y="-31" width="61" height="62" rx="14" fill="url(#gWa)"/><path d="M-21 21L-17.500 9.500A20.500 20.500 0 1 1 -9.500 17.500Z" fill="none" stroke="#fff" stroke-width="4.500" stroke-linejoin="round"/><path d="M-8 -11Q-5 -13 -4 -10L-2 -5Q-2 -3 -4 -2Q-1 4 4 5L6.500 3Q8 2 12 5Q14 7 10 10Q6 13 -1 9Q-10 3 -11 -4Q-11 -9 -8 -11Z" fill="#fff"/><circle class="badge" cx="24" cy="-24" r="14"/><text class="bt" x="24" y="-18.500" font-size="15.500">2</text><circle class="dot" cy="44" r="4"/></svg>
  <!-- Rocket.Chat -->
  <svg viewBox="-40.500 -46 81 98"><rect x="-30.500" y="-31" width="61" height="62" rx="14" fill="url(#gRc)"/><path d="M-18 -16Q-12 -16 -8 -11C4 -16 19 -11 19 0S4 16 -8 11Q-12 16 -18 16Q-14 12 -15 7Q-20 0 -15 -7Q-14 -12 -18 -16Z" fill="none" stroke="#fff" stroke-width="3.800" stroke-linejoin="round"/><g fill="#fff"><circle cx="-7" r="2.500"/><circle r="2.500"/><circle cx="7" r="2.500"/></g><circle class="badge" cx="24" cy="-24" r="14"/><circle cx="24" cy="-23" r="2" fill="#fff"/><circle class="dot" cy="44" r="4"/></svg>
  <!-- Discord -->
  <svg viewBox="-40.500 -46 81 98"><rect x="-30.500" y="-31" width="61" height="62" rx="14" fill="url(#gDisc)"/><path d="M-16 -13Q-10 -16 -6 -16.500L-4 -13.500Q0 -14 4 -13.500L6 -16.500Q11 -16 16 -13Q23 -2 22.500 12Q18 16 12 17L9 13Q12 12 13 11Q0 16 -13 11Q-11 12 -9 13L-12 17Q-18 16 -22.500 12Q-23 -2 -16 -13Z" fill="#fff"/><ellipse cx="-7.500" cy="2" rx="4" ry="4.500" fill="#5f6cf5"/><ellipse cx="7.500" cy="2" rx="4" ry="4.500" fill="#5f6cf5"/></svg>
  <!-- Telegram -->
  <svg viewBox="-40.500 -46 81 98"><rect x="-30.500" y="-31" width="61" height="62" rx="14" fill="url(#gSilver)"/><circle r="26" fill="url(#gTg)"/><path d="M-16 0L12 -11Q14 -11 13 -8L9 11Q8 13 5 11L-2 6 -5 9Q-7 10 -7 8L-8 3Z" fill="#fff"/><path d="M-7 3L7 -6 -3 5" fill="#9cc8e6"/></svg>
  <!-- Twitter -->
  <svg viewBox="-40.500 -46 81 98"><rect x="-30.500" y="-31" width="61" height="62" rx="14" fill="url(#gTw)"/><path transform="translate(-20 -20) scale(1.670)" fill="#fff" d="M23.953 4.570a10 10 0 0 1-2.825.775 4.958 4.958 0 0 0 2.163-2.723c-.951.555-2.005.959-3.127 1.184a4.920 4.920 0 0 0-8.384 4.482C7.690 8.095 4.067 6.130 1.640 3.162a4.822 4.822 0 0 0-.666 2.475c0 1.710.87 3.213 2.188 4.096a4.904 4.904 0 0 1-2.228-.616v.06a4.923 4.923 0 0 0 3.946 4.827 4.996 4.996 0 0 1-2.212.085 4.936 4.936 0 0 0 4.604 3.417 9.867 9.867 0 0 1-6.102 2.105c-.39 0-.779-.023-1.170-.067a13.995 13.995 0 0 0 7.557 2.209c9.053 0 13.998-7.496 13.998-13.985 0-.21 0-.42-.015-.63A9.935 9.935 0 0 0 24 4.590z"/></svg>
  <!-- VLC -->
  <svg viewBox="-40.500 -46 81 98"><path d="M-24 10H24L30.500 36H-30.500Z" fill="url(#gCone)"/><path d="M-20 16Q-21 27 0 30Q21 27 20 16L17 10H-17Z" fill="#dd5f10"/><path d="M-4 -33Q0 -35 4 -33L18 14Q10 20 0 20T-18 14Z" fill="#e9e9e9"/><path d="M-4 -33Q0 -35 4 -33L7 -23Q0 -20 -7 -23ZM-10 -12Q0 -6 10 -12L14 1Q0 8 -14 1Z" fill="#f58a0b"/></svg>
  <!-- Blender -->
  <svg viewBox="-40.500 -46 81 98"><path d="M2 -25L24 -9M-20 -12H14M-30 16L4 -10" stroke="#e87d0d" stroke-width="8" stroke-linecap="round"/><path d="M5 -26L26 -11Q35 -4 35 6C35 19 24 29 11 29S-13 19 -13 6Q-13 -2 -6 -8L2 -16Z" fill="#e87d0d"/><circle cx="10.500" cy="4" r="14.500" fill="#fff"/><circle cx="10.500" cy="4" r="9.500" fill="#265787"/></svg>
  <i class="dsep"></i>
  <!-- Word -->
  <svg viewBox="-40.500 -46 81 98"><rect x="-30.500" y="-31" width="61" height="62" rx="14" fill="#fff"/><path d="M-15 -20.500H20V-10H-15Z" fill="#41a5ee"/><path d="M-15 -10H20V0H-15Z" fill="#2b7cd3"/><path d="M-15 0H20V10H-15Z" fill="#185abd"/><path d="M-15 10H20V20.500H-15Z" fill="#103f91"/><rect x="-25" y="-12" width="23.500" height="23" rx="2" fill="#1857b8"/><path d="M-21 -6L-17.500 6 -13.500 -5 -9.500 6 -6 -6" fill="none" stroke="#fff" stroke-width="2.400"/></svg>
  <!-- Command -->
  <svg viewBox="-40.500 -46 81 98"><rect x="-30.500" y="-30.500" width="61" height="61" rx="13" fill="#dcdfe2"/><rect x="-26" y="-27" width="53" height="54" rx="9" fill="url(#gCmd)"/><g transform="translate(10 11)" fill="none" stroke="#cfcfcf" stroke-width="2.600"><path d="M-4 -4H4V4H-4ZM-4 -4V-6.500A2.700 2.700 0 1 0 -6.700 -4H-4M4 -4V-6.500A2.700 2.700 0 1 1 6.700 -4H4M4 4V6.500A2.700 2.700 0 1 0 6.700 4H4M-4 4V6.500A2.700 2.700 0 1 1 -6.700 4H-4"/></g></svg>
  <!-- Preview -->
  <svg viewBox="-40.500 -46 81 98"><rect x="-31" y="-31" width="61" height="62" rx="13" fill="#f0f0f0"/><path d="M-27 -15Q-27 -26 -16 -26H15Q26 -26 26 -15V2H-27Z" fill="url(#gSky)"/><path d="M-27 2H26V26H-16Q-27 26 -27 15Z" fill="#26406f"/><path d="M-27 9Q-18 9 -12 15L-4 14V26H-16Q-27 26 -27 15Z" fill="#dfe9ee"/><path d="M-27 19L-16 14 -6 20 -6 26H-16Q-26 25 -27 19Z" fill="#6c604f"/><path d="M1 10H25L31 30Q31 34 27 34H0Q-4 34 -4 30Z" fill="#b5babe" stroke="#44484d"/><path d="M3 15H22L26 29H1Z" fill="#eef1f4"/><path d="M8 20L14 17 18 25 11 28Z" fill="#6f82a5"/><rect x="0" y="-1" width="27" height="13" rx="3" fill="#111"/><ellipse cx="13.500" cy="0" rx="12" ry="2" fill="#3c3c3c"/></svg>
  <i class="dsep"></i>
  <!-- Documents stack -->
  <svg viewBox="-40.500 -46 81 98"><path d="M-19 -36H10V-30H-19Z" fill="#151515"/><path d="M-25 -29H-19V35H-25Z" fill="#444"/><path d="M-21 -32H23V35H-21Z" fill="#f1f1f1"/><path d="M-10 -22H10M-8 -19H8M-19 -15H19M-19 -12.500H19M-19 -8H19M-19 -5.500H19M-19 -3H19M-19 0H-4M-19 27H14" stroke="#777" stroke-width="1"/><rect x="-20" y="3" width="38" height="20" fill="#777"/><rect x="-9" y="7" width="16" height="8" fill="#eee"/><path d="M6 -36L22 -12H6Z" fill="#fafafa" stroke="#ccc" stroke-width=".8"/></svg>
  <!-- Trash -->
  <svg viewBox="-40.500 -46 81 98"><path d="M-27 -28L-19 28Q-18 34 0 34T19 28L27 -28Z" fill="url(#gTrash)"/><path d="M-14 -18L-12 28M10 -20L6 24" stroke="#b9bdbe" stroke-width="3" opacity=".3"/><ellipse cy="-27" rx="27" ry="6" fill="#4a4e50" stroke="#a5a9aa"/><path d="M-24 -28L-19 -36 -11 -31 -4 -36 2 -32 9 -36 14 -31 22 -32 24 -26 15 -22 7 -25 1 -21 -8 -23 -16 -20Z" fill="#e9e9e9"/><path d="M-9 -29L-2 -31 2 -27 -5 -26Z" fill="#3cb8ac"/><path d="M-17 -30L-12 -27 -17 -23ZM8 -32L14 -27 9 -24ZM-1 -23L5 -30 6 -25Z" fill="#5a4038"/></svg>
</div>
</footer>

<svg class="cursor" viewBox="0 0 26 38"><path d="M1.500 1.500V29L8 23.500 12.500 33Q15 35 17.500 31L13 22H22Z" fill="#000" stroke="#fff" stroke-width="2" stroke-linejoin="round"/></svg>
</body>
</html>
```
FILE: styles.css
```css
* { box-sizing: border-box; }

body {
  margin: 0;
  width: 2880px;
  height: 1800px;
  overflow: hidden;
  display: flex;
  flex-direction: column;
  position: relative;
  background: #182447;
  font-family: Inter, "Liberation Sans", sans-serif;
  color: #fff;
}

svg { display: block; overflow: visible; }
.defs { position: absolute; width: 0; height: 0; }

/* Menu bar */
.menubar {
  height: 50px;
  flex: none;
  padding: 0 0 1px 28px;
  display: grid;
  grid-template-columns: 79px 236px 84px 88px 100px 128px 151px 105px 132px 84px 138px 303px 75px 71px 69px 78px 82px 67px 64px 65px 69px 76px 52px 80px 62px 70px 136px 1fr;
  align-items: center;
  font-size: 25.3px;
  line-height: 44px;
  color: #e8e9ed;
  white-space: nowrap;
  background: #182447;
}
.menubar span, .menubar b { padding-bottom: 3px; }
.menubar .m-app { margin-left: -1px; font-size: 26px; letter-spacing: .25px; }
.mi { width: 48px; height: 48px; }
.bat { width: 56px; height: 48px; }
.mi .f, .bat .f { fill: #e8e9ed; }
.mi .s { fill: none; stroke: #e8e9ed; stroke-linejoin: round; }
.menubar .pct { font-size: 22px; }
.date { letter-spacing: .4px; }

/* Browser window */
.window {
  height: 1638px;
  flex: none;
  display: flex;
  flex-direction: column;
  background: #808080;
  border: 2px solid #636363;
  border-bottom-color: #8c8c8c;
  border-radius: 20px;
  overflow: hidden;
  box-shadow: 0 0 0 1px #000, 0 4px 24px 8px rgba(0, 0, 0, .6);
}

.tabstrip {
  height: 78px;
  flex: none;
  display: flex;
  background: #1b1b1b;
  padding-left: 40px;
}
.lights { display: flex; gap: 16px; padding-top: 27px; width: 162px; }
.lights i { width: 24px; height: 24px; border-radius: 50%; }
.red { background: #ff5f57; }
.amber { background: #febc2e; }
.green { background: #28c840; }
.vt { width: 28px; height: 28px; margin-top: 32px; }
.tab {
  width: 480px;
  height: 64px;
  margin: 14px 0 0 32px;
  padding: 0 24px 0 22px;
  display: flex;
  align-items: center;
  background: #3b3b3b;
  border-radius: 14px 14px 0 0;
}
.tabtitle { margin: 0 0 1px 20px; font-size: 24px; flex: 1; }
.close { width: 18px; height: 18px; margin-top: 2px; }
.plus { width: 28px; height: 28px; margin: 31px 0 0 21px; }

.toolbar {
  height: 76px;
  flex: none;
  padding-left: 30px;
  display: grid;
  grid-template-columns: 88px 88px 88px 80px 1614px 88px 88px 88px 72px 26px 88px 88px 88px 92px 92px 1fr;
  align-items: center;
  background: #3b3b3b;
}
.ti { width: 48px; height: 48px; fill: none; stroke: #fff; stroke-width: 2; stroke-linejoin: round; }
.ti.dim { stroke: #7f7f7f; }
.ti.star { stroke: #8f8f8f; }
.tsep { width: 2px; height: 32px; background: #666; }
.address {
  width: 1582px;
  height: 60px;
  padding: 0 15px 0 20px;
  display: flex;
  align-items: center;
  background: #2b2b2b;
  border-radius: 10px;
}
.url { flex: 1; margin-left: 19px; font-size: 28px; }
.url em { font-style: normal; color: #8f8f8f; }

.bookmarks {
  height: 66px;
  flex: none;
  padding: 0 0 8px 26px;
  display: grid;
  grid-template-columns: 48px 84px 48px 104px 48px 126px 48px 96px 48px 96px 48px 36px 138px 47px 169px 64px 64px 48px 172px 64px 47px 259px 48px 256px 48px 278px 46px 24px 48px 1fr;
  align-items: center;
  background: #3b3b3b;
  border-bottom: 2px solid #636363;
  font-size: 23.8px;
  white-space: nowrap;
}
.i32 { width: 32px; height: 32px; }
.i24 { width: 24px; height: 24px; }
.bsep { width: 4px; height: 32px; background: #636363; }

/* Page */
.page {
  flex: 1;
  display: flex;
  justify-content: center;
  align-items: flex-start;
  padding-top: 267px;
  background: linear-gradient(#808080 0, #808080 1390px, #727272 100%);
}
.card {
  width: 1516px;
  height: 882px;
  border: 6px solid #000;
  background: #fff;
  color: #000;
  font-family: "Liberation Serif", "Times New Roman", serif;
  text-align: center;
  padding-top: 41px;
}
.card h2 { margin: 0; font-size: 48px; line-height: 56px; }
.card ul { list-style: none; margin: 39px 0 0; padding: 0 0 0 16px; font-size: 40px; }
.card li { line-height: 46px; padding: 16px 0; }

/* Dock */
.desk { flex: 1; display: flex; padding: 4px 0 10px 62px; background: linear-gradient(90deg, transparent 0, transparent 2770px, #0d1120 2860px, #141c38 100%); }
.dock {
  width: 2757px;
  height: 98px;
  padding-left: 4.500px;
  display: flex;
  align-items: center;
  background: #1e2540;
  border: 2px solid #44495f;
  border-radius: 26px;
  box-shadow: 0 0 0 1px #0a0e1c;
}
.dock svg { width: 80.9px; height: 98px; flex: none; }
.dsep { width: 2px; height: 70px; margin: 0 14.500px 0 19.800px; background: #5b6178; flex: none; }
.dot { fill: #9da4c0; }
.badge { fill: #f23b33; }
.bt, .ct { text-anchor: middle; font-family: Inter, sans-serif; }
.bt { fill: #fff; }
.serif { font-family: "Liberation Serif", serif; fill: #444; }
.mono { font-family: "Liberation Mono", monospace; font-weight: 700; fill: #19d52c; }

.cursor { position: absolute; left: 2535px; top: 853px; width: 26px; height: 38px; filter: drop-shadow(0 2px 2px rgba(0, 0, 0, .4)); }
```
